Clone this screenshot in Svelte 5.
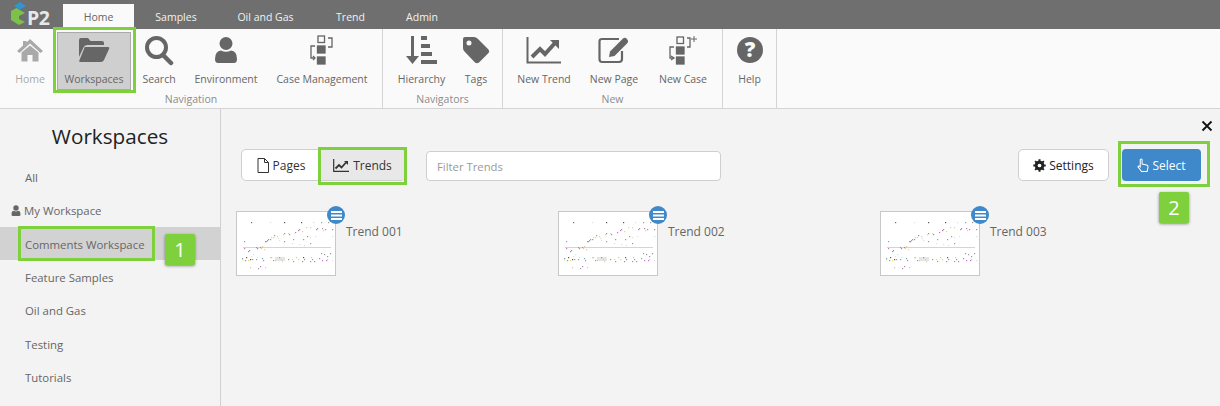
<script>
  // Workspaces picker with the ribbon above it. Numbered callouts and the
  // green frames are annotations drawn over the app.
  const tabs = ['Home', 'Samples', 'Oil and Gas', 'Trend', 'Admin'];

  const sideItems = ['All', 'My Workspace', 'Comments Workspace', 'Feature Samples', 'Oil and Gas', 'Testing', 'Tutorials'];

  const trends = ['Trend 001', 'Trend 002', 'Trend 003'];

  const P = '#c078c0';
  const Y = '#efdc5a';
  const T = '#74abab';
  const G = '#9a9a9a';
  const D = '#555555';
  const L = '#d6e4e4';
  const O = '#e6c69a';

  // read off the thumbnail: [x, y, colour]
  const dots = [
    [14, 10, '#a0603a'], [33, 10, L], [47, 10, D], [64, 10, D], [76, 10, L], [84, 10, T], [91, 10, G],
    [69, 15, Y], [73, 15, Y], [79, 17, P], [80, 16, P], [85, 16, P], [86, 18, Y], [88, 17, P], [95, 17, G],
    [61, 18, P], [62, 17, G], [65, 19, Y], [58, 20, P], [51, 21, Y], [52, 22, P], [46, 22, Y], [47, 21, G],
    [40, 24, Y], [37, 23, P], [36, 25, Y], [34, 25, Y], [31, 27, T], [30, 28, G], [33, 27, G], [28, 29, P],
    [70, 24, G], [73, 25, L], [78, 24, L], [41, 26, L], [42, 28, L], [47, 29, G], [56, 27, T], [66, 27, G],
    [7, 29, T], [29, 29, G], [55, 31, L], [62, 32, L], [67, 33, L], [73, 31, T], [95, 24, L],
    [7, 36, P], [23, 35, P], [25, 34, O], [24, 36, Y], [20, 36, T], [27, 37, Y], [19, 35, G], [12, 38, T], [11, 39, G],
    [16, 42, L], [14, 44, L], [9, 45, D], [5, 46, T], [5, 47, Y], [11, 48, Y], [8, 48, P], [13, 47, D], [15, 47, T],
    [19, 47, G], [20, 45, L], [25, 46, T], [26, 48, P], [33, 45, O], [34, 45, O], [36, 48, G], [42, 45, T], [44, 47, O],
    [45, 49, Y], [38, 48, O], [51, 47, T], [55, 47, Y], [59, 45, O], [61, 47, Y], [56, 49, T], [66, 45, D], [67, 47, P],
    [65, 49, P], [74, 45, O], [75, 47, T], [73, 49, T], [77, 49, P], [82, 46, T], [85, 48, P], [89, 48, P], [90, 47, Y],
    [84, 41, T], [87, 42, G], [90, 44, T], [93, 41, T], [95, 48, L], [13, 55, O], [21, 56, G], [23, 54, P], [28, 55, O]
  ];
</script>

<div class="app">
  <header class="tabbar">
    <div class="logo">
      <svg viewBox="10 0 17 29" width="17" height="29">
        <path d="M14 6 L20 2 L26 6 L20 9.500 Z" fill="#2f95d6" />
        <path d="M11 11 L16.500 8 L25 13 L19 16 V19 L25 22 L19 25 L11 20 Z" fill="#7ec14a" />
      </svg>
      <span class="logo-text">P2</span>
    </div>
    <nav class="tabs">
      {#each tabs as tab, i}
        <span class="tab tab-{i}" class:active={i === 0}>{tab}</span>
      {/each}
    </nav>
  </header>

  <section class="ribbon">
    <div class="group group-nav">
      <div class="items">
        <div class="item disabled w-home">
          <svg viewBox="0 0 28 24" width="28" height="24"><path d="M14 1 L27 13 L24.500 15 L14 5.500 L3.500 15 L1 13 L7 7.500 V3 H10.500 V4.500 Z M5.500 14.500 L14 7.500 L22.500 14.500 V23.500 H16.500 V17 H11.500 V23.500 H5.500 Z" fill="#a9a9a9" /></svg>
          <span>Home</span>
        </div>
        <div class="item selected w-ws">
          <svg viewBox="0 0 32 26" width="32" height="26"><path d="M1 3 Q1 1 3 1 H10 L12.500 4 H24 Q26 4 26 6 V8 H9 Q6.500 8 5.500 10.500 L1 20 Z M7 10 H30 Q32 10 31 12 L26 23 Q25 25 23 25 H2 Q0.500 25 1.500 23 L6 12 Q6.500 10 7 10 Z" fill="#666" /></svg>
          <span>Workspaces</span>
        </div>
        <div class="item w-search">
          <svg viewBox="0 0 30 30" width="30" height="30"><circle cx="12.500" cy="12.500" r="9.500" fill="none" stroke="#666" stroke-width="4" /><path d="M19 20 L27 28" stroke="#666" stroke-width="4.500" stroke-linecap="round" /></svg>
          <span>Search</span>
        </div>
        <div class="item w-env">
          <svg viewBox="0 0 24 28" width="24" height="28"><circle cx="12" cy="7.500" r="6.500" fill="#666" /><path d="M1 23 Q1 15 7 14.500 Q12 17 17 14.500 Q23 15 23 23 Q23 27 20 27 H4 Q1 27 1 23 Z" fill="#666" /></svg>
          <span>Environment</span>
        </div>
        <div class="item w-case">
          <svg viewBox="0 0 26 30" width="26" height="30" fill="none" stroke="#666" stroke-width="1.300">
            <rect x="9" y="1" width="6.500" height="6.500" />
            <rect x="8.500" y="11" width="7.500" height="7" fill="#666" />
            <rect x="8.500" y="22" width="7.500" height="7" fill="#666" />
            <path d="M19 3 H23 V12 H19" />
            <path d="M6 11 H2 V23 H6" />
            <path d="M4 21 L6 23 L4 25" />
          </svg>
          <span>Case Management</span>
        </div>
      </div>
      <div class="group-label">Navigation</div>
    </div>

    <div class="group group-navs">
      <div class="items">
        <div class="item w-hier">
          <svg viewBox="0 0 32 30" width="32" height="30" fill="#666">
            <path d="M5 1 H8 V21 H13 L6.500 29 L0 21 H5 Z" />
            <rect x="15" y="1" width="6" height="4" />
            <rect x="15" y="9" width="9" height="4" />
            <rect x="15" y="17" width="11" height="4" />
            <rect x="15" y="25" width="16" height="4" />
          </svg>
          <span>Hierarchy</span>
        </div>
        <div class="item w-tags">
          <svg viewBox="0 0 28 28" width="28" height="28"><path fill-rule="evenodd" d="M3 1 H12 Q14 1 15.500 2.500 L26.500 13.500 Q28 15.500 26.500 17 L17 26.500 Q15 28 13 26.500 L2.500 15.500 Q1 14 1 12 V3 Q1 1 3 1 Z M7 4.500 A2.500 2.500 0 1 0 7 9.500 A2.500 2.500 0 1 0 7 4.500 Z" fill="#666" /></svg>
          <span>Tags</span>
        </div>
      </div>
      <div class="group-label">Navigators</div>
    </div>

    <div class="group group-new">
      <div class="items">
        <div class="item w-ntrend">
          <svg viewBox="0 0 36 28" width="36" height="28" fill="none" stroke="#666">
            <path d="M1.500 1 V26.500 H35" stroke-width="2" />
            <path d="M6 21 L14 13 L19 18 L29 7" stroke-width="4" />
            <path d="M24 4 H33 V13 Z" fill="#666" stroke="none" />
          </svg>
          <span>New Trend</span>
        </div>
        <div class="item w-npage">
          <svg viewBox="0 0 32 28" width="32" height="28" fill="none" stroke="#666">
            <path d="M21 3 H4 Q1.500 3 1.500 5.500 V23 Q1.500 26 4 26 H21 Q24 26 24 23 V15" stroke-width="2.200" />
            <path d="M11 21 L12 15.500 L25 2.500 Q27 1 29 3 Q31 5 29.500 7 L16.500 20 Z" fill="#666" stroke="none" />
          </svg>
          <span>New Page</span>
        </div>
        <div class="item w-ncase">
          <svg viewBox="0 0 32 30" width="32" height="30" fill="none" stroke="#666" stroke-width="1.300">
            <rect x="10" y="2" width="6.500" height="6.500" />
            <rect x="9.500" y="12" width="7.500" height="7" fill="#666" />
            <rect x="9.500" y="22" width="7.500" height="7" fill="#666" />
            <path d="M20 3 H23 V12 H20" />
            <path d="M7 12 H3 V23 H7" />
            <path d="M4 21 L7 23 L4 25" />
            <path d="M27 1 V7 M24 4 H30" stroke-width="1" />
          </svg>
          <span>New Case</span>
        </div>
      </div>
      <div class="group-label">New</div>
    </div>

    <div class="group group-help">
      <div class="items">
        <div class="item w-help">
          <svg viewBox="0 0 28 28" width="28" height="28"><circle cx="14" cy="14" r="13" fill="#666" /><text x="14" y="21" class="help-mark">?</text></svg>
          <span>Help</span>
        </div>
      </div>
      <div class="group-label"></div>
    </div>
  </section>

  <div class="body">
    <aside class="side">
      <h1>Workspaces</h1>
      <ul>
        {#each sideItems as item}
          <li class:current={item === 'Comments Workspace'} class:mine={item === 'My Workspace'}>
            {#if item === 'My Workspace'}
              <svg viewBox="0 0 10 11" width="10" height="11"><circle cx="5" cy="3" r="2.700" fill="#666" /><path d="M0.500 9.500 Q0.500 6 2.800 5.800 Q5 7 7.200 5.800 Q9.500 6 9.500 9.500 Q9.500 11 8 11 H2 Q0.500 11 0.500 9.500 Z" fill="#666" /></svg>
            {/if}
            <span>{item}</span>
            {#if item === 'Comments Workspace'}
              <i class="frame frame-comments"></i>
              <b class="callout callout-1">1</b>
            {/if}
          </li>
        {/each}
      </ul>
    </aside>

    <main class="main">
      <svg class="close" viewBox="0 0 12 12" width="12" height="12"><path d="M1.500 1.500 L10.500 10.500 M10.500 1.500 L1.500 10.500" stroke="#111" stroke-width="1.800" /></svg>

      <div class="toolbar">
        <div class="toggle">
          <button class="seg">
            <svg viewBox="0 0 12 15" width="12" height="15" fill="none" stroke="#333"><path d="M1 .5 H7.500 L11.500 4.500 V14.500 H1 Z M7.500 .5 V4.500 H11.500" /></svg>
            Pages
          </button>
          <button class="seg on">
            <svg viewBox="0 0 16 13" width="16" height="13" fill="none" stroke="#333"><path d="M.7 0 V12.300 H16" stroke-width="1.200" /><path d="M2.500 9.500 L6 6 L8.500 8.500 L13 3.500" stroke-width="1.800" /><path d="M11 2 H15 V6 Z" fill="#333" stroke="none" /></svg>
            Trends
            <i class="frame frame-trends"></i>
          </button>
        </div>
        <input class="filter" placeholder="Filter Trends" />
        <div class="spacer"></div>
        <button class="settings">
          <svg viewBox="0 0 14 14" width="13" height="13"><circle cx="7" cy="7" r="3.800" fill="none" stroke="#222" stroke-width="2.800" /><path d="M7 .3 V13.700 M.3 7 H13.700 M2.300 2.300 L11.700 11.700 M11.700 2.300 L2.300 11.700" stroke="#222" stroke-width="2.200" /><circle cx="7" cy="7" r="2" fill="#fff" /></svg>
          Settings
        </button>
        <button class="select">
          <svg viewBox="0 0 13 16" width="12" height="15"><path d="M3.500 1.500 Q4.500 .5 5.500 1.500 V6.500 L10.500 7.500 Q12 8 12 9.500 L11 14.500 H5 L1 9.500 Q1 8.500 2.500 8.500 L3.500 9.500 Z" fill="none" stroke="#fff" stroke-width="1.100" /></svg>
          Select
          <i class="frame frame-select"></i>
          <b class="callout callout-2">2</b>
        </button>
      </div>

      <div class="cards">
        {#each trends as name}
          <div class="card">
            <div class="thumb">
              <svg viewBox="0 0 98 62" width="98" height="62">
                <rect x="6" y="35" width="88" height="1" fill="#d4d4d4" />
                <rect x="38" y="45" width="10" height="4" fill="#e6e6e6" />
                {#each dots as d}
                  <rect x={d[0]} y={d[1]} width="1.200" height="1.200" fill={d[2]} />
                {/each}
              </svg>
              <span class="badge">
                <svg viewBox="0 0 11 9" width="11" height="9" fill="#fff"><rect width="11" height="2" /><rect y="3.500" width="11" height="2" /><rect y="7" width="11" height="2" /></svg>
              </span>
            </div>
            <span class="card-name">{name}</span>
          </div>
        {/each}
      </div>
    </main>
  </div>

  <i class="frame frame-workspaces"></i>
</div>

<style>
  :global(body) {
    margin: 0;
    background: #f3f3f3;
  }

  .app {
    position: relative;
    width: 1220px;
    height: 406px;
    overflow: hidden;
    display: flex;
    flex-direction: column;
    font-family: 'Open Sans', 'Noto Sans', sans-serif;
    font-size: 10.500px;
    color: #666;
  }

  .tabbar {
    height: 29px;
    flex: none;
    display: flex;
    background: #6f6f6f;
  }

  .logo {
    display: flex;
    width: 44px;
    margin-left: 10px;
    flex: none;
  }

  .logo svg {
    flex: none;
  }

  .logo-text {
    padding-top: 6px;
    line-height: 23px;
    font-weight: 700;
    font-size: 19.500px;
    letter-spacing: -0.500px;
    color: #e8e8e8;
  }

  .tabs {
    display: flex;
    margin-left: 9px;
    padding-top: 4px;
  }

  .tab {
    display: flex;
    align-items: center;
    justify-content: center;
    height: 25px;
    font-size: 10.500px;
    color: #f2f2f2;
  }

  .tab.active {
    background: #fafafa;
    color: #666;
  }

  .tab-0 { width: 71px; }
  .tab-1 { width: 84px; }
  .tab-2 { width: 95px; }
  .tab-3 { width: 75px; }
  .tab-4 { width: 68px; }

  .ribbon {
    height: 79px;
    flex: none;
    display: flex;
    background: #fafafa;
    border-bottom: 1px solid #d4d4d4;
    box-sizing: content-box;
  }

  .group {
    display: flex;
    flex-direction: column;
    border-right: 1px solid #d4d4d4;
    box-sizing: border-box;
  }

  .group-nav { width: 383px; }
  .group-navs { width: 120px; }
  .group-new { width: 220px; }
  .group-help { width: 54px; }

  .items {
    flex: 1;
    display: flex;
    padding-top: 3px;
  }

  .group-nav .items { padding-left: 5px; }
  .group-navs .items { padding-left: 13px; }
  .group-new .items { padding-left: 7px; }

  .item {
    display: flex;
    flex-direction: column;
    align-items: center;
    box-sizing: border-box;
    height: 58px;
    padding-top: 2px;
    white-space: nowrap;
    color: #666;
  }

  .item svg {
    height: 32px;
    flex: none;
  }

  .item span {
    margin-top: 6px;
    line-height: 15px;
    font-size: 10.500px;
  }

  .item.disabled {
    color: #a9a9a9;
  }

  .item.selected {
    background: #cfcfcf;
    border: 1px solid #aaa;
    padding-top: 1px;
  }

  .w-home { width: 50px; margin-right: 2px; }
  .w-ws { width: 74px; }
  .w-search { width: 56px; }
  .w-env { width: 78px; }
  .w-case { width: 114px; }
  .w-hier { width: 51px; margin-right: 3px; }
  .w-tags { width: 52px; }
  .w-ntrend { width: 68px; }
  .w-npage { width: 72px; }
  .w-ncase { width: 66px; }
  .w-help { width: 53px; }

  .group-label {
    height: 16px;
    line-height: 15px;
    text-align: center;
    font-size: 10.500px;
    color: #8c8c8c;
  }

  .body {
    flex: 1;
    display: flex;
    min-height: 0;
  }

  .side {
    width: 221px;
    flex: none;
    box-sizing: border-box;
    background: #f3f3f3;
    border-right: 1px solid #d0d0d0;
  }

  .side h1 {
    margin: 0;
    padding-top: 13px;
    height: 51.500px;
    box-sizing: border-box;
    text-align: center;
    font-size: 20.700px;
    line-height: 29px;
    font-weight: 400;
    color: #222;
  }

  .side ul {
    list-style: none;
    margin: 0;
    padding: 0;
  }

  .side li {
    position: relative;
    display: flex;
    align-items: center;
    box-sizing: border-box;
    height: 33.300px;
    padding: 1px 0 0 25px;
    font-size: 11.400px;
    color: #666;
  }

  .side li.current {
    background: #d2d2d2;
  }

  .side li.mine {
    padding-left: 11px;
    gap: 3px;
  }

  .main {
    position: relative;
    flex: 1;
    min-width: 0;
    background: #f3f3f3;
  }

  .close {
    position: absolute;
    top: 11px;
    right: 7px;
  }

  .toolbar {
    display: flex;
    align-items: flex-start;
    padding: 40px 19px 0 20px;
  }

  .toggle {
    display: flex;
    height: 32px;
    box-sizing: border-box;
    background: #fff;
    border: 1px solid #cfcfcf;
    border-radius: 5px;
  }

  button {
    font: inherit;
    color: #333;
    cursor: pointer;
  }

  .seg {
    position: relative;
    display: flex;
    align-items: center;
    gap: 4px;
    border: 0;
    background: transparent;
    font-size: 12px;
    padding: 0;
  }

  .seg:first-child {
    width: 78px;
    justify-content: center;
  }

  .seg.on {
    width: 85px;
    justify-content: center;
    background: #e8e8e8;
    border-radius: 0 4px 4px 0;
  }

  .filter {
    width: 295px;
    height: 30px;
    box-sizing: border-box;
    margin: 2px 0 0 20px;
    padding: 0 10px;
    background: #fff;
    border: 1px solid #cfcfcf;
    border-radius: 4px;
    font: inherit;
    font-size: 11.300px;
  }

  .filter::placeholder {
    color: #999;
  }

  .spacer {
    flex: 1;
  }

  .settings {
    display: flex;
    align-items: center;
    justify-content: center;
    gap: 3px;
    width: 91px;
    height: 32px;
    padding: 0;
    background: #fff;
    border: 1px solid #cfcfcf;
    border-radius: 5px;
    font-size: 12px;
    color: #222;
  }

  .select {
    position: relative;
    display: flex;
    align-items: center;
    justify-content: center;
    gap: 3px;
    width: 79px;
    height: 32px;
    margin-left: 13px;
    padding: 0;
    background: #3f88c9;
    border: 0;
    border-radius: 4px;
    font-size: 12px;
    color: #fff;
  }

  .cards {
    display: flex;
    gap: 222px;
    padding: 30px 0 0 15px;
  }

  .card {
    display: flex;
    width: 100px;
    white-space: nowrap;
  }

  .thumb {
    position: relative;
    flex: none;
    width: 100px;
    height: 65px;
    box-sizing: border-box;
    background: #fff;
    border: 1px solid #c8c8c8;
  }

  .thumb > svg {
    display: block;
  }

  .badge {
    position: absolute;
    top: -6px;
    right: -10px;
    display: flex;
    align-items: center;
    justify-content: center;
    width: 18px;
    height: 18px;
    border-radius: 50%;
    background: #3f88c9;
  }

  .card-name {
    margin: 12px 0 0 10px;
    font-size: 12px;
    line-height: 17px;
    color: #666;
  }

  .help-mark {
    font-family: 'Open Sans', sans-serif;
    font-weight: 800;
    font-size: 21px;
    fill: #fafafa;
    text-anchor: middle;
  }

  .frame {
    position: absolute;
    display: block;
    box-sizing: border-box;
    border: 3px solid #7ed13c;
    pointer-events: none;
  }

  .frame-workspaces {
    left: 53px;
    top: 27px;
    width: 83px;
    height: 66px;
  }

  .frame-comments {
    left: 18px;
    top: -1px;
    width: 137px;
    height: 35px;
  }

  .frame-trends {
    left: -2px;
    top: -3px;
    width: 89px;
    height: 38px;
  }

  .frame-select {
    left: -4px;
    top: -8px;
    width: 92px;
    height: 46px;
  }

  .callout {
    position: absolute;
    display: flex;
    align-items: center;
    justify-content: center;
    width: 30px;
    height: 31px;
    border-radius: 2px;
    background: #7ed13c;
    box-shadow: 0 1px 3px rgba(0, 0, 0, 0.45);
    color: #fff;
    font-size: 20px;
    font-weight: 400;
  }

  .callout-1 {
    left: 165px;
    top: 7px;
  }

  .callout-2 {
    left: 37px;
    top: 43px;
  }
</style>
